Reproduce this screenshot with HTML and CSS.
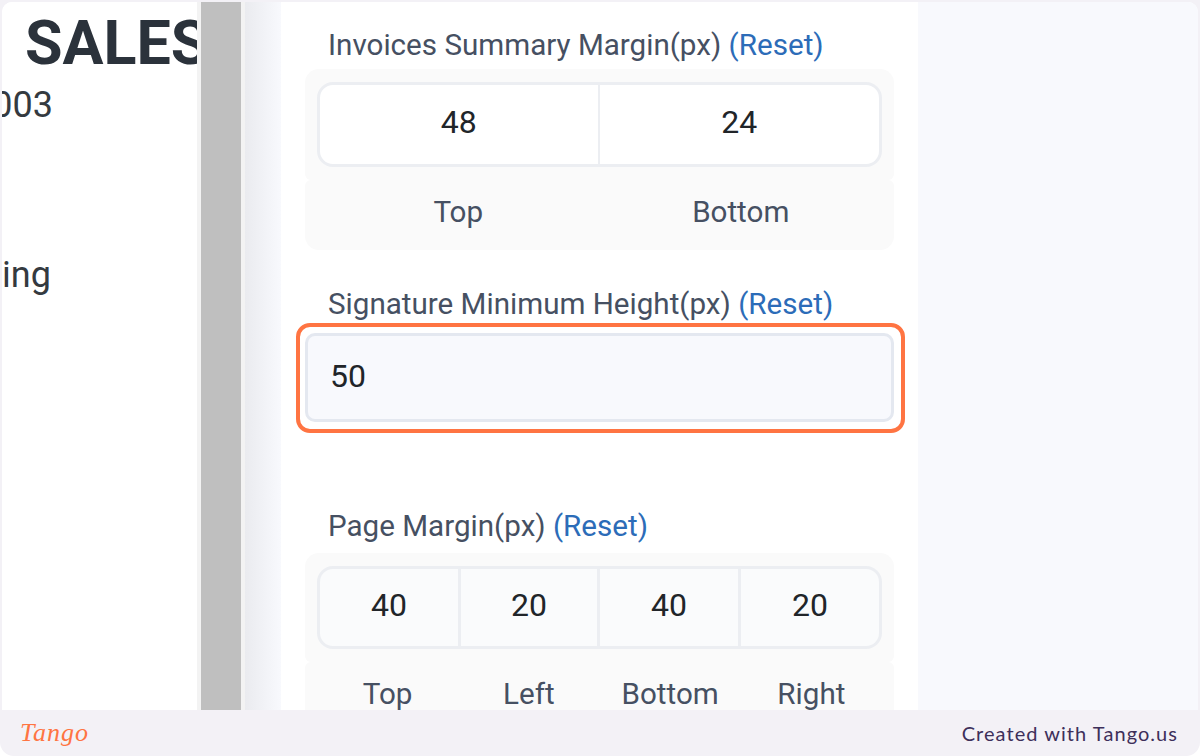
FILE: index.html
```html
<!DOCTYPE html>
<html lang="en">
<head>
    <meta charset="UTF-8">
    <title>Invoice Settings</title>
    <link rel="stylesheet" href="styles.css">
</head>
<body>

    <div class="frame">
        <div class="shot">
            <div class="preview">
                <h1 class="preview-title">SALES</h1>
                <div class="preview-number">0003</div>
                <div class="preview-status">ing</div>
            </div>

            <div class="scrollbar"><div class="scrollbar-thumb"></div></div>
            <div class="shade"></div>

            <div class="settings">
                <div class="label">Invoices Summary Margin(px) <a class="reset">(Reset)</a></div>
                <div class="field-group">
                    <div class="inputs">
                        <div class="input-cell">48</div>
                        <div class="input-cell">24</div>
                    </div>
                    <div class="captions">
                        <div class="caption">Top</div>
                        <div class="caption">Bottom</div>
                    </div>
                </div>

                <div class="label label-signature">Signature Minimum Height(px) <a class="reset">(Reset)</a></div>
                <div class="signature-input">
                    50
                    <div class="highlight"></div>
                </div>

                <div class="label label-page">Page Margin(px) <a class="reset">(Reset)</a></div>
                <div class="field-group field-group-page">
                    <div class="inputs inputs-page">
                        <div class="input-cell">40</div>
                        <div class="input-cell">20</div>
                        <div class="input-cell">40</div>
                        <div class="input-cell">20</div>
                    </div>
                    <div class="captions">
                        <div class="caption">Top</div>
                        <div class="caption">Left</div>
                        <div class="caption">Bottom</div>
                        <div class="caption">Right</div>
                    </div>
                </div>
            </div>

            <div class="backdrop"></div>
        </div>

        <div class="footer">
            <span class="footer-logo">Tango</span>
            <span class="footer-text">Created with Tango.us</span>
        </div>
    </div>

</body>
</html>
```

FILE: styles.css
```css
html, body {
    margin: 0;
    padding: 0;
}

body {
    width: 1200px;
    height: 756px;
    overflow: hidden;
    background-color: #fff;
    font-family: Roboto, "Liberation Sans", sans-serif;
}

.frame {
    width: 1200px;
    height: 756px;
    display: flex;
    flex-direction: column;
    background-color: #f3f1f6;
    border-radius: 0 0 14px 14px;
    overflow: hidden;
}

.shot {
    flex: 1;
    min-height: 0;
    display: flex;
    margin: 2px 2px 0 2px;
    border-radius: 10px 10px 0 0;
    overflow: hidden;
    background-color: #fff;
}

.footer {
    height: 46px;
    flex-shrink: 0;
    display: flex;
    justify-content: space-between;
    align-items: center;
    padding: 0 22px 0 20px;
}

.footer-logo {
    font-family: "Liberation Serif", serif;
    font-style: italic;
    font-size: 26px;
    color: #ff7442;
    letter-spacing: 1px;
}

.footer-text {
    font-family: Lato, sans-serif;
    font-size: 20px;
    letter-spacing: 1.05px;
    color: #3d2f5a;
}

/* left part, cut off by the scrollbar */
.preview {
    width: 195px;
    flex-shrink: 0;
    overflow: hidden;
    background-color: #fff;
    white-space: nowrap;
}

.preview-title {
    margin: 6px 0 0 23px;
    font-size: 61px;
    line-height: 70px;
    font-weight: 700;
    color: #2b323b;
}

.preview-number {
    margin: 2px 0 0 -30px;
    font-size: 36px;
    line-height: 50px;
    color: #343a40;
}

.preview-status {
    margin: 120px 0 0 0;
    font-size: 36px;
    line-height: 50px;
    color: #343a40;
}

.scrollbar {
    width: 48px;
    flex-shrink: 0;
    padding: 0 4px;
    box-sizing: border-box;
    background-color: #f3f3f3;
}

.scrollbar-thumb {
    height: 100%;
    background-color: #bfbfbf;
}

.shade {
    width: 36px;
    flex-shrink: 0;
    background: linear-gradient(to right, #eaebef, #f8f9fd);
}

.settings {
    width: 589px;
    flex-shrink: 0;
    padding: 24px 24px 0 24px;
    background-color: #fff;
}

.backdrop {
    flex: 1;
    background-color: #f8f9fd;
}

.label {
    padding-left: 23px;
    font-size: 29.6px;
    line-height: 38px;
    color: #465062;
    white-space: nowrap;
}

.reset {
    color: #2c6cb8;
}

.label-signature {
    margin-top: 35px;
}

.label-page {
    margin-top: 85px;
}

.field-group {
    margin-top: 5px;
}

.field-group-page {
    margin-top: 8px;
}

.inputs {
    display: grid;
    grid-template-columns: repeat(2, 1fr);
    padding: 13px 12px 13px 12px;
    background-color: #fafafa;
    border-radius: 14px 14px 6px 6px;
}

.inputs-page {
    grid-template-columns: 144px 139px 141px 141px;
}

.input-cell {
    box-sizing: border-box;
    height: 85px;
    padding-bottom: 5px;
    display: flex;
    align-items: center;
    justify-content: center;
    font-size: 32px;
    color: #212529;
    background-color: #fff;
    border: 3px solid #eceef2;
    border-left-width: 0;
}

.inputs-page .input-cell {
    height: 83px;
    background-color: #fafbfc;
}

.input-cell:first-child {
    border-left-width: 3px;
    border-radius: 16px 0 0 16px;
}

.input-cell:last-child {
    border-radius: 0 16px 16px 0;
}

.inputs .input-cell:first-child {
    border-right-width: 2px;
}

.inputs-page .input-cell:first-child {
    border-right-width: 3px;
}

.captions {
    display: flex;
    padding: 0 12px;
    background-color: #fafafa;
    border-radius: 6px 6px 14px 14px;
}

.caption {
    box-sizing: border-box;
    flex: 1;
    height: 70px;
    padding-bottom: 6px;
    display: flex;
    align-items: center;
    justify-content: center;
    font-size: 29.6px;
    color: #465062;
}

.signature-input {
    position: relative;
    box-sizing: border-box;
    height: 89px;
    margin-top: 10px;
    display: flex;
    align-items: center;
    padding: 0 0 3px 22px;
    font-size: 32px;
    color: #212529;
    background-color: #f8f9fd;
    border: 3px solid #e4e8f0;
    border-radius: 10px;
}

.highlight {
    position: absolute;
    top: -13px;
    right: -14px;
    bottom: -14px;
    left: -12px;
    border: 4px solid #ff7442;
    border-radius: 14px;
}
```
